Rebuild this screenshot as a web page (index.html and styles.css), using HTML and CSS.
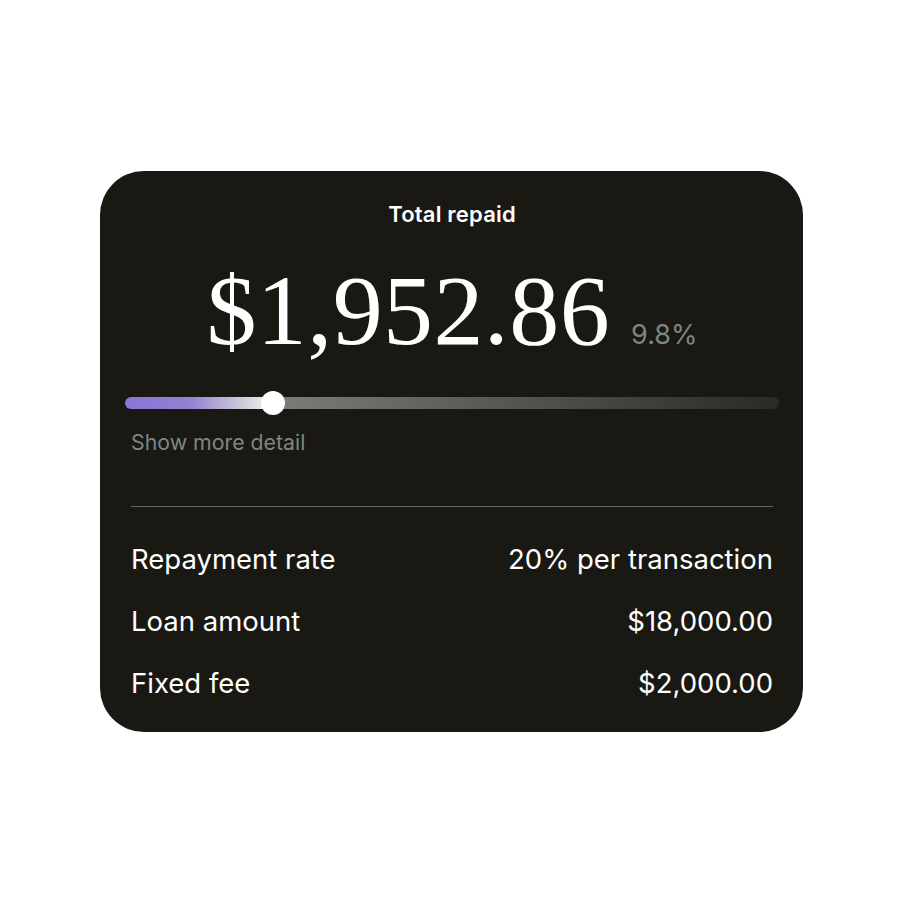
FILE: index.html
```html
<!DOCTYPE html>
<html lang="en">
<head>
<meta charset="utf-8">
<title>Total repaid</title>
<link rel="stylesheet" href="styles.css">
</head>
<body>
<div class="card">
  <div class="title">Total repaid</div>
  <div class="amount">
    <span class="big">$1,952.86</span>
    <span class="pct">9.8%</span>
  </div>
  <div class="slider">
    <div class="track"></div>
    <div class="thumb"></div>
  </div>
  <div class="more">Show more detail</div>
  <div class="divider"></div>
  <div class="rows">
    <div class="row"><span>Repayment rate</span><span>20% per transaction</span></div>
    <div class="row"><span>Loan amount</span><span>$18,000.00</span></div>
    <div class="row"><span>Fixed fee</span><span>$2,000.00</span></div>
  </div>
</div>
</body>
</html>
```
FILE: styles.css
```css
html, body {
  margin: 0;
  padding: 0;
  background: #ffffff;
}
body {
  padding: 171px 0 0 100px;
  font-family: Inter, "Liberation Sans", sans-serif;
}
.card {
  width: 703px;
  height: 561px;
  box-sizing: border-box;
  background: #1a1812;
  border-radius: 44px;
  padding: 30px 30px 0 31px;
  color: #ffffff;
  display: flex;
  flex-direction: column;
}
.title {
  font-size: 22px;
  line-height: 26px;
  font-weight: 600;
  letter-spacing: 0.2px;
  text-align: center;
}
.amount {
  margin-top: 34px;
  display: flex;
  justify-content: center;
  align-items: baseline;
  gap: 21px;
  height: 100px;
}
.big {
  font-family: "Liberation Serif", serif;
  font-size: 100px;
  line-height: 100px;
  letter-spacing: 0.4px;
}
.pct {
  font-size: 27px;
  line-height: 30px;
  color: #7c8783;
}
.slider {
  position: relative;
  margin-top: 29px;
  margin-left: -6px;
  margin-right: -6px;
  height: 26px;
  display: flex;
  align-items: center;
}
.track {
  width: 100%;
  height: 12px;
  border-radius: 6px;
  background: linear-gradient(90deg, #8a74d8 0%, #9382cf 10%, #d6d5db 19%, #f4f4f4 22.6%, #7e7c76 22.6%, #2a2925 100%);
}
.thumb {
  position: absolute;
  left: 136px;
  top: 1px;
  width: 24px;
  height: 24px;
  border-radius: 50%;
  background: #ffffff;
}
.more {
  margin-top: 13px;
  font-size: 21.3px;
  line-height: 26px;
  color: #7c8783;
}
.divider {
  margin-top: 51px;
  height: 1px;
  background: #62685f;
}
.rows {
  margin-top: 21px;
  display: flex;
  flex-direction: column;
}
.row {
  display: flex;
  justify-content: space-between;
  font-size: 27.5px;
  line-height: 62px;
}
```
